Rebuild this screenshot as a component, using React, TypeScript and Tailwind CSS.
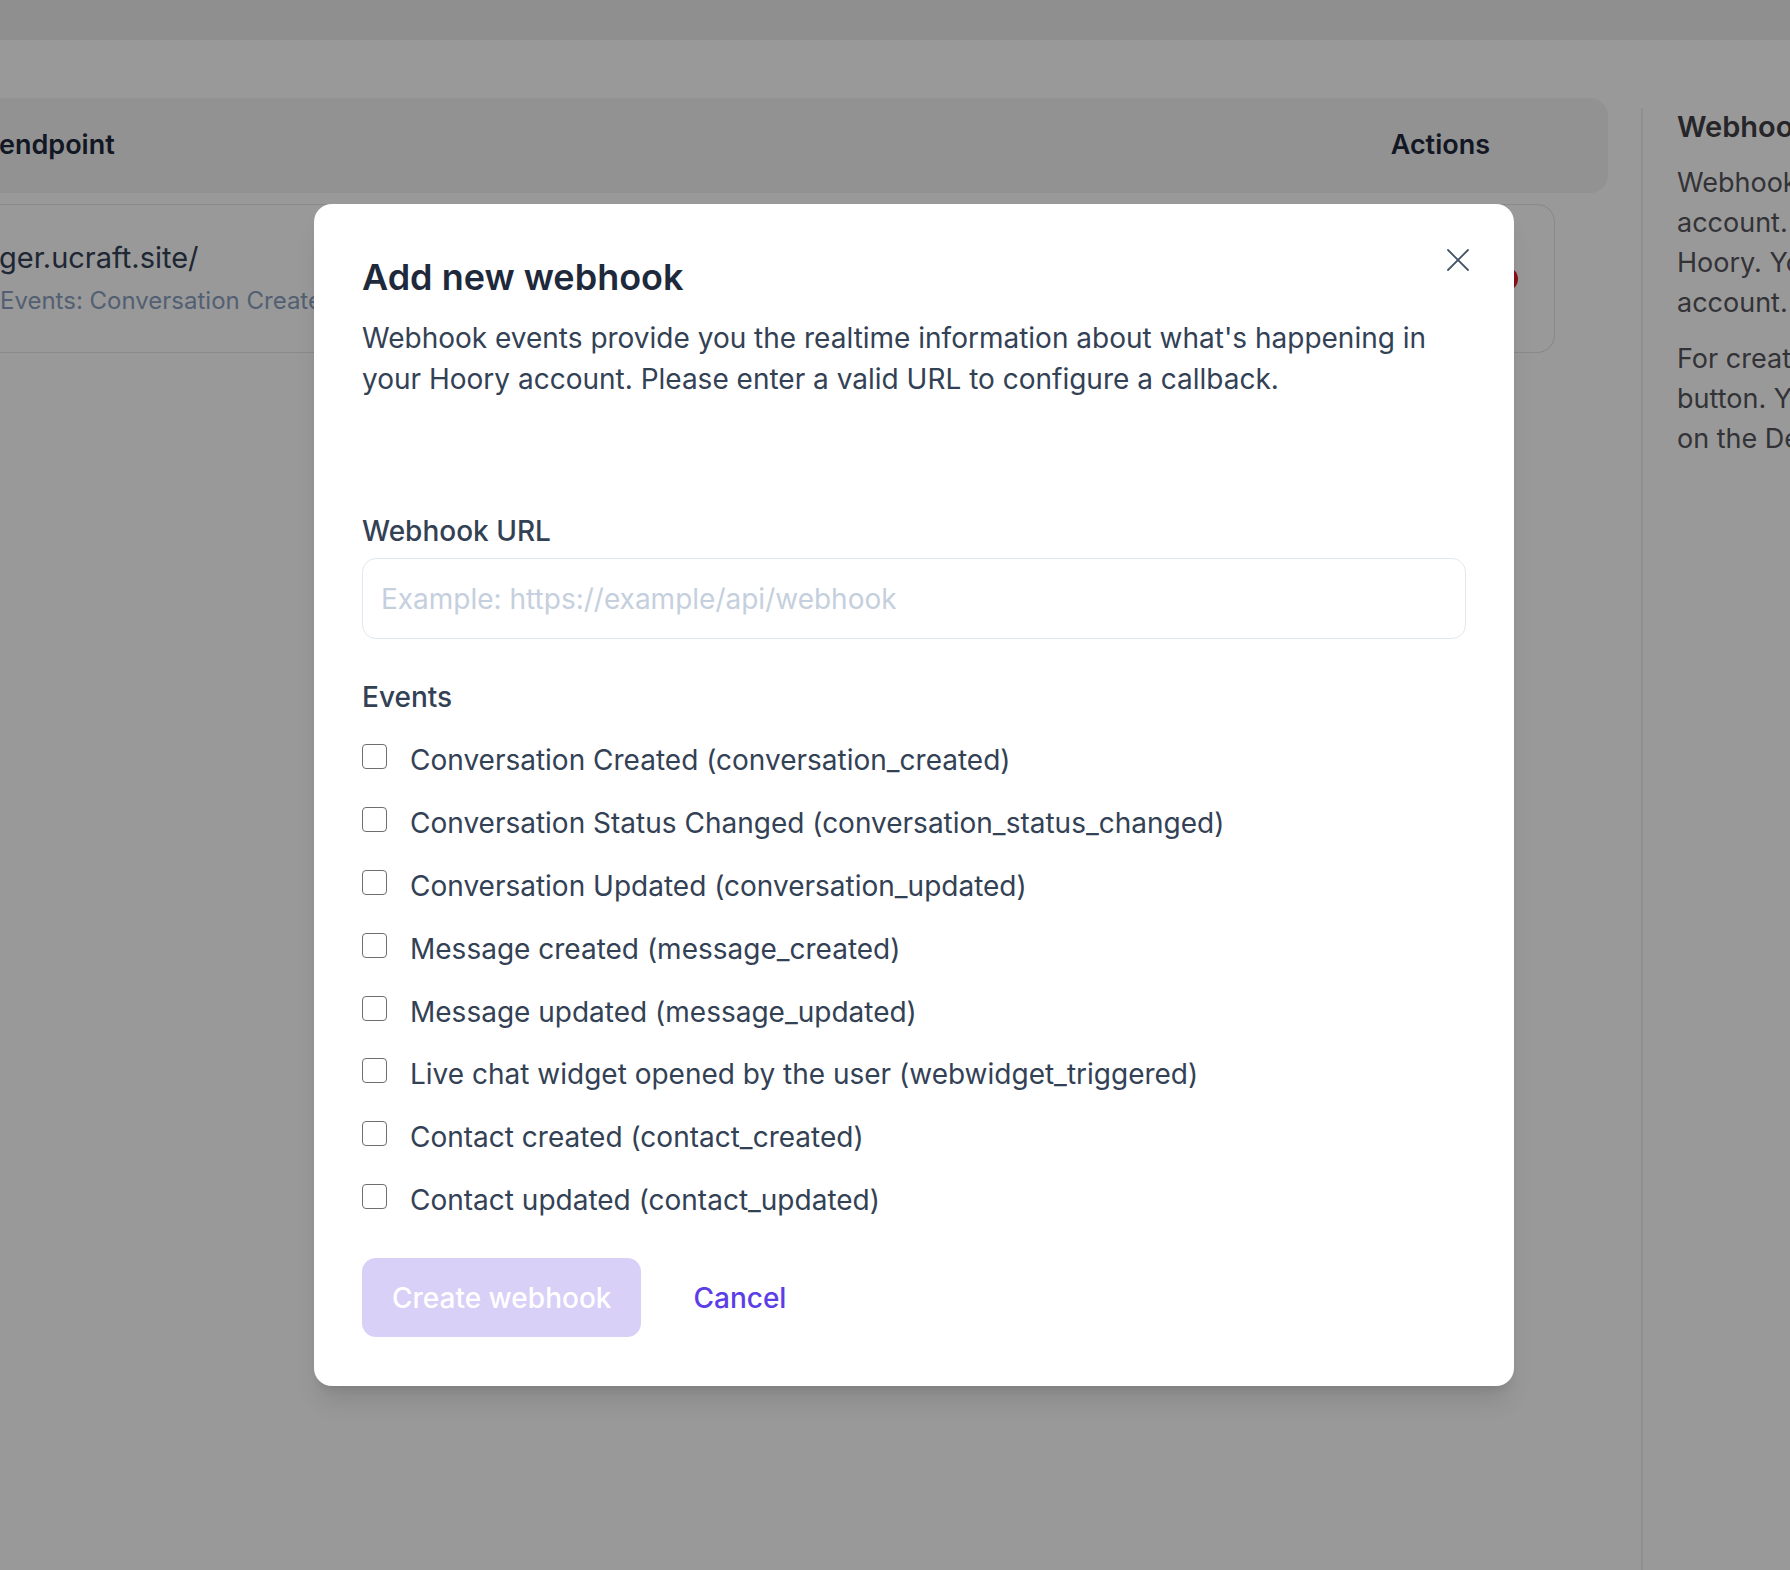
import React from "react";

const events = [
  "Conversation Created (conversation_created)",
  "Conversation Status Changed (conversation_status_changed)",
  "Conversation Updated (conversation_updated)",
  "Message created (message_created)",
  "Message updated (message_updated)",
  "Live chat widget opened by the user (webwidget_triggered)",
  "Contact created (contact_created)",
  "Contact updated (contact_updated)",
];

function CloseIcon() {
  return (
    <svg width="22" height="22" viewBox="0 0 22 22" fill="none" stroke="#475569" strokeWidth="1.8" strokeLinecap="round">
      <line x1="1" y1="1" x2="21" y2="21" />
      <line x1="21" y1="1" x2="1" y2="21" />
    </svg>
  );
}

export default function App() {
  return (
    <div className="relative h-[1570px] w-full overflow-hidden bg-white font-['Inter',sans-serif]">
      {/* underlying page */}
      <div className="h-[40px] bg-[#eeeef0]" />
      <div className="flex">
        <main className="w-[1608px] shrink-0 pt-[58px]">
          <div className="flex h-[95px] items-center justify-between rounded-r-[18px] bg-[#f4f4f5] pr-[118px] text-[27px] font-semibold text-[#1e293b]">
            <span className="-ml-[1px]">endpoint</span>
            <span>Actions</span>
          </div>
          <div className="mt-[11px] flex h-[149px] w-[1555px] items-center rounded-r-[18px] border-[1.5px] border-l-0 border-[#e4e4e7]">
            <div className="flex flex-col">
              <span className="-ml-[1px] text-[29px] leading-[36px] text-[#334155]">ger.ucraft.site/</span>
              <span className="mt-[9px] text-[24px] leading-[32px] text-[#8a9fc0]">Events: Conversation Created</span>
            </div>
            <div className="ml-auto mr-[36px] h-[24px] w-[24px] rounded-full bg-[#e11d2a]" />
          </div>
        </main>
        <aside className="ml-[33px] mt-[68px] h-[1470px] flex-1 whitespace-nowrap border-l-2 border-[#eceef1] pl-[34px] pt-[1px]">
          <h3 className="text-[29px] font-semibold leading-[36px] text-[#3f3f46]">Webhooks</h3>
          <p className="mt-[18px] text-[27px] leading-[40px] text-[#55555c]">
            Webhooks are HTTP callbacks which can be defined for every
            <br />
            account. They are triggered by events like message creation in
            <br />
            Hoory. You can create more than one webhook for this
            <br />
            account.
          </p>
          <p className="mt-[16px] text-[27px] leading-[40px] text-[#55555c]">
            For creating a webhook, click on the Add new webhook
            <br />
            button. You can also remove any existing webhook by clicking
            <br />
            on the Delete button.
          </p>
        </aside>
      </div>

      {/* overlay + modal */}
      <div className="absolute inset-0 bg-black/40 pl-[314px] pt-[204px]">
        <div className="relative w-[1200px] rounded-[18px] bg-white px-[48px] pb-[49px] pt-[51px] shadow-xl">
          <button className="absolute right-[45px] top-[45px] flex h-[22px] w-[22px] items-center justify-center">
            <CloseIcon />
          </button>
          <h2 className="text-[36px] font-semibold leading-[44px] text-[#1e293b]">Add new webhook</h2>
          <p className="mt-[19px] text-[28px] leading-[41px] text-[#334155]">
            Webhook events provide you the realtime information about what's happening in
            <br />
            your Hoory account. Please enter a valid URL to configure a callback.
          </p>

          <label className="mt-[113px] block text-[28px] font-medium leading-[36px] text-[#334155]">Webhook URL</label>
          <input
            type="text"
            placeholder="Example: https://example/api/webhook"
            className="mt-[9px] block h-[81px] w-full rounded-[14px] border-[1.5px] border-[#e2e8f0] px-[18px] text-[28px] text-[#334155] outline-none placeholder:text-[#c5cfdd]"
          />

          <div className="mt-[40px] text-[28px] font-medium leading-[36px] text-[#334155]">Events</div>
          <div className="mt-[27px] flex flex-col gap-[26.9px]">
            {events.map((e) => (
              <label key={e} className="flex h-[36px] items-start gap-[23px]">
                <input
                  type="checkbox"
                  className="mt-[2px] h-[25px] w-[25px] shrink-0 appearance-none rounded-[4px] border-[1.5px] border-[#6f6f6f] bg-white"
                />
                <span className="text-[28px] leading-[36px] text-[#334155]">{e}</span>
              </label>
            ))}
          </div>

          <div className="mt-[40px] flex items-center">
            <button className="h-[79px] rounded-[14px] bg-[#d8d0f7] px-[30px] text-[28px] font-medium text-white">
              Create webhook
            </button>
            <button className="ml-[52px] text-[28px] font-medium text-[#5b3ee6]">Cancel</button>
          </div>
        </div>
      </div>
    </div>
  );
}
